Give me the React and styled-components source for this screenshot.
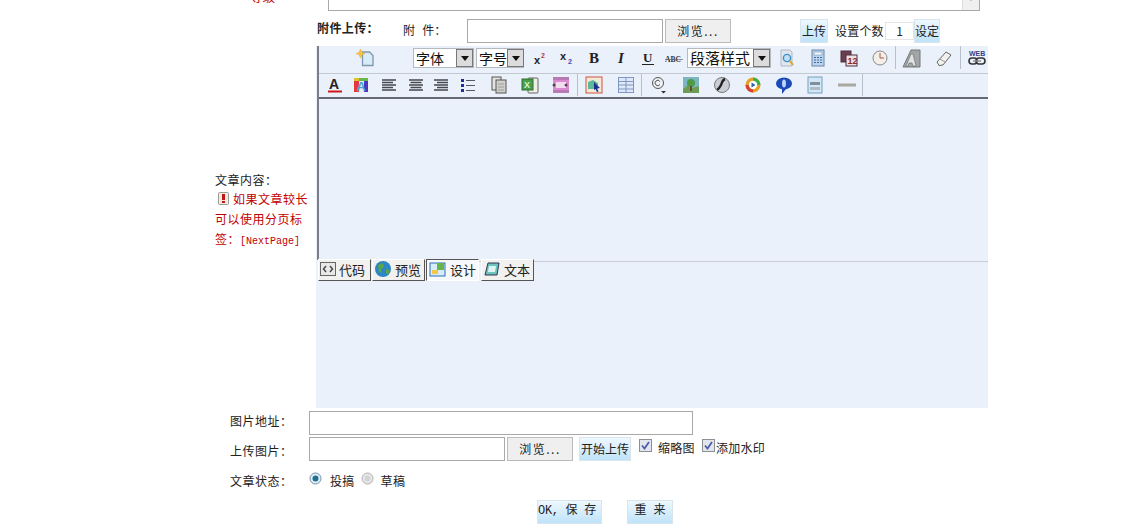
import React from 'react';
import styled, { createGlobalStyle } from 'styled-components';

const MONO_STACK = '"Liberation Mono", "Noto Sans CJK SC", monospace';
const COLON = '\uFF1A';

const GlobalStyle = createGlobalStyle`
  html, body {
    margin: 0;
    padding: 0;
    background: #fff;
    overflow: hidden;
  }
  body {
    font-family: "Noto Sans CJK SC", "Liberation Sans", sans-serif;
    font-size: 12px;
    color: #222;
  }
`;

const Page = styled.div`
  width: 1126px;
  height: 532px;
  overflow: hidden;
`;

const TopRow = styled.div`
  display: flex;
  height: 11px;
  overflow: hidden;
  align-items: flex-end;
`;
const LevelLabel = styled.div`
  width: 78px;
  margin-left: 250px;
  color: #c00000;
  font-size: 12.5px;
  line-height: 18px;
  height: 18px;
  flex: none;
  margin-bottom: 5px;
`;
const TopBox = styled.div`
  width: 652px;
  height: 30px;
  border: 1px solid #a9a9a9;
  box-sizing: border-box;
  flex: none;
  position: relative;
`;
const TopArrow = styled.div`
  position: absolute;
  right: 0;
  bottom: 0;
  width: 16px;
  height: 20px;
  background: #f0f0f0;
  border-left: 1px solid #ddd;
  &::after {
    content: '';
    position: absolute;
    left: 5px;
    bottom: 6px;
    border: 3px solid transparent;
    border-top: 3px solid #999;
  }
`;

const AttachRow = styled.div`
  display: flex;
  align-items: center;
  height: 26px;
  margin-top: 7px;
  padding-left: 317px;
`;
const AttachTitle = styled.b`
  width: 86px;
  margin-bottom: 8px;
  letter-spacing: 0.4px;
  white-space: nowrap;
`;
const AttachLabel = styled.span`
  width: 64px;
  margin-bottom: 2px;
  font-family: ${MONO_STACK};
  white-space: pre;
`;
const TextBox = styled.div`
  box-sizing: border-box;
  width: ${p => p.$w}px;
  height: 24px;
  border: 1px solid #a9a9a9;
  background: #fff;
  flex: none;
`;
const BrowseButton = styled.div`
  box-sizing: border-box;
  width: 66px;
  height: 24px;
  margin-left: 2px;
  border: 1px solid #bbb;
  background: #efefef;
  text-align: center;
  line-height: 22px;
  letter-spacing: 1.5px;
  flex: none;
`;
const BlueButton = styled.div`
  box-sizing: border-box;
  height: 24px;
  width: ${p => p.$w}px;
  margin-left: ${p => p.$ml || 0}px;
  border: 1px solid #d8e4ee;
  background: linear-gradient(#eef8ff, #bfe3f8);
  text-align: center;
  line-height: 21px;
  flex: none;
  white-space: pre;
`;
const SaveButton = styled(BlueButton)`
  font-family: ${MONO_STACK};
  text-align: left;
  letter-spacing: -0.3px;
`;
const ResetButton = styled(BlueButton)`
  font-family: ${MONO_STACK};
`;
const CountLabel = styled.span`
  margin-left: 7px;
  margin-bottom: 2px;
  width: 50px;
  flex: none;
  letter-spacing: 0.2px;
`;
const CountBox = styled.div`
  box-sizing: border-box;
  width: 29px;
  height: 18px;
  border: 1px solid #e4e4e4;
  text-align: center;
  line-height: 16px;
  flex: none;
`;

const EditorRow = styled.div`
  display: flex;
  margin-top: 2px;
`;
const SideNote = styled.div`
  width: 101px;
  margin-left: 215px;
  padding-top: 124px;
  line-height: 20px;
  flex: none;
  letter-spacing: 0.5px;
`;
const NoteTitle = styled.div`
  height: 19px;
`;
const RedText = styled.div`
  color: #c00000;
  font-size: 12px;
`;
const RedSmall = styled.span`
  font-family: "Liberation Mono", monospace;
  font-size: 10px;
  letter-spacing: 0;
`;
const WarnMark = styled.svg`
  vertical-align: -1px;
  margin: 0 4px 0 3px;
`;
const Editor = styled.div`
  width: 672px;
  height: 362px;
  background: #eaf1fb;
  overflow: hidden;
  flex: none;
  padding-left: 1px;
  box-sizing: border-box;
`;
const EditorFrame = styled.div`
  border-left: 2px solid #7b7e86;
`;
const ToolRow = styled.div`
  box-sizing: border-box;
  display: flex;
  align-items: center;
  height: ${p => p.$h}px;
  padding-bottom: ${p => p.$pb || 0}px;
  border-bottom: ${p => p.$bottom || 'none'};
`;
const ToolSlot = styled.div`
  width: 20px;
  height: 20px;
  margin-left: ${p => p.$ml}px;
  display: flex;
  align-items: center;
  justify-content: center;
  flex: none;
`;
const ToolSep = styled.div`
  width: 1px;
  align-self: stretch;
  margin-left: ${p => p.$ml}px;
  background: #b9bfc8;
  flex: none;
`;
const FakeSelect = styled.div`
  box-sizing: border-box;
  display: flex;
  width: ${p => p.$w}px;
  height: 20px;
  margin-left: ${p => p.$ml}px;
  background: #fff;
  border: 1px solid #b5b9c0;
  font-size: ${p => p.$fs}px;
  line-height: 18px;
  color: #111;
  flex: none;
`;
const SelectText = styled.span`
  flex: 1;
  padding-left: 2px;
  white-space: nowrap;
`;
const SelectArrow = styled.span`
  width: 17px;
  background: #dcdcdc;
  border: 1px solid #777;
  box-sizing: border-box;
  position: relative;
  flex: none;
  &::after {
    content: '';
    position: absolute;
    left: 4px;
    top: 6px;
    border: 4px solid transparent;
    border-top: 5px solid #111;
  }
`;
const DesignArea = styled.div`
  height: 161px;
  border-top: 2px solid #666a73;
`;
const TabStrip = styled.div`
  display: flex;
  height: 22px;
  margin-top: -1px;
  margin-left: 1px;
  gap: 1px;
  position: relative;
  &::before {
    content: '';
    position: absolute;
    left: 0;
    right: 0;
    top: 2px;
    height: 1px;
    background: #c9ced6;
  }
`;
const Tab = styled.div`
  box-sizing: border-box;
  position: relative;
  display: flex;
  align-items: center;
  gap: 3px;
  width: 53px;
  height: 22px;
  margin-left: ${p => p.$ml || 0}px;
  padding-left: ${p => (p.$active ? 2 : 1)}px;
  padding-bottom: 2px;
  font-size: 13px;
  background: ${p => (p.$active ? '#f6f8fb' : '#f1f1ef')};
  border-style: solid;
  border-width: 1px;
  border-color: ${p => (p.$active ? '#555 #fff #fff #555' : '#fff #555 #555 #fff')};
`;

const FieldRow = styled.div`
  display: flex;
  align-items: center;
  height: ${p => p.$h}px;
  margin-top: ${p => p.$mt || 0}px;
  padding-left: 230px;
`;
const FieldLabel = styled.div`
  width: 79px;
  letter-spacing: 0.5px;
  flex: none;
  margin-bottom: ${p => p.$lift || 0}px;
  margin-top: ${p => p.$drop || 0}px;
`;
const Tick = styled.span`
  display: inline-flex;
  flex: none;
  margin-left: ${p => p.$ml}px;
  margin-top: ${p => p.$mt}px;
`;
const Inline = styled.span`
  margin-left: ${p => p.$ml}px;
  margin-bottom: ${p => p.$lift || 0}px;
  letter-spacing: 0.3px;
  flex: none;
`;
const ActionRow = styled.div`
  display: flex;
  padding-left: 537px;
  margin-top: 8px;
`;

const I = ({ children, w = 18, h = 18, vb }) => (
  <svg width={w} height={h} viewBox={vb || `0 0 ${w} ${h}`}>{children}</svg>
);

const NewDoc = () => <I><path d="M6.500 3h7l3.500 3.500V16.500H6.500z" fill="#d8ebf9" stroke="#7e98ae" strokeWidth="1.300"/><path d="M0 4.500l3-1L4.500 0 6 3.500l3 1-3 1.200L4.500 9 3 5.700z" fill="#f5c542" stroke="#e5a63a" strokeWidth=".5"/></I>;
const Sup = () => <I><text x="3" y="15" fontSize="11" fontWeight="700" fontFamily="Liberation Sans" fill="#222">x</text><text x="10" y="9" fontSize="7" fontWeight="700" fontFamily="Liberation Sans" fill="#c23a3a">2</text></I>;
const Sub = () => <I><text x="2" y="11" fontSize="11" fontWeight="700" fontFamily="Liberation Sans" fill="#222">x</text><text x="10" y="15" fontSize="7" fontWeight="700" fontFamily="Liberation Sans" fill="#3a4ac2">2</text></I>;
const Bold = () => <I><text x="3" y="14" fontSize="15" fontWeight="700" fontFamily="Liberation Serif" fill="#222">B</text></I>;
const Ital = () => <I><text x="5" y="14" fontSize="15" fontWeight="700" fontStyle="italic" fontFamily="Liberation Serif" fill="#222">I</text></I>;
const Under = () => <I><text x="4" y="13" fontSize="13" fontWeight="700" fontFamily="Liberation Serif" fill="#222">U</text><path d="M3 15.500h12" stroke="#222"/></I>;
const Strike = () => <I><text x="0" y="13" fontSize="7.500" fontWeight="700" fontFamily="Liberation Serif" fill="#333">ABC</text><path d="M0 10.500h18" stroke="#666" strokeWidth=".7"/></I>;
const Search = () => <I><path d="M3 1h9l2 2v14H3z" fill="#dfe6ee" stroke="#aeb8c4"/><circle cx="9" cy="9" r="3.600" fill="#bfe0f5" stroke="#3d8ecb" strokeWidth="1.400"/><path d="M12 12l3 4" stroke="#e2a32c" strokeWidth="2"/></I>;
const Calc = () => <I><rect x="3" y="1" width="12" height="16" fill="#bcd4ee" stroke="#6a86a8"/><rect x="5" y="3" width="8" height="3" fill="#eef5fc" stroke="#6a86a8" strokeWidth=".5"/><path d="M5 8.500h8M5 11h8M5 13.500h8" stroke="#3f6ba3" strokeDasharray="2 1"/></I>;
const DateIco = () => <I><rect x="1" y="2" width="10" height="11" fill="#6d3d50" stroke="#4a3340"/><rect x="6" y="6" width="11" height="11" fill="#ecdfe2" stroke="#4a3340"/><text x="7.500" y="15" fontSize="9" fontWeight="700" fontFamily="Liberation Sans" fill="#8a2b2b">12</text></I>;
const Clock = () => <I><circle cx="9" cy="9" r="7" fill="#f3efe6" stroke="#8d8a84"/><path d="M9 4v5h4" fill="none" stroke="#a55" strokeWidth="1"/></I>;
const BigA = () => <I w={20} h={20}><path d="M1 19L9 2h9v17z" fill="#a0a6a6" stroke="#777"/><path d="M4 18L9 6h2l3 12h-3l-1-3H7l-1 3z" fill="#dfe3e3" stroke="#666" strokeWidth=".6"/></I>;
const Eraser = () => <I><path d="M2 13L11 3l5 3-8 10-4 .5z" fill="#f1f1ee" stroke="#666"/><path d="M5 10l5 3" stroke="#999"/></I>;
const Web = () => <I><text x="1" y="7" fontSize="7" fontWeight="700" fontFamily="Liberation Sans" fill="#36418e">WEB</text><rect x="1" y="9" width="8" height="6" rx="3" fill="none" stroke="#333" strokeWidth="1.600"/><rect x="8" y="9" width="9" height="6" rx="3" fill="none" stroke="#333" strokeWidth="1.600"/><path d="M5 12h8" stroke="#888" strokeWidth="1.400"/></I>;
const ForeA = () => <I><text x="3" y="13" fontSize="14" fontWeight="700" fontFamily="Liberation Sans" fill="#222">A</text><rect x="2" y="14.500" width="14" height="2" fill="#d21818"/></I>;
const BackA = () => <I><rect x="2" y="2" width="5" height="14" fill="#e23a3a"/><rect x="7" y="2" width="5" height="14" fill="#e8ecf2"/><rect x="12" y="2" width="4" height="14" fill="#4a38c0"/><rect x="2" y="2" width="14" height="3" fill="#66b84a"/><rect x="2" y="2" width="5" height="3" fill="#e0c030"/><text x="4.500" y="15" fontSize="13" fontWeight="700" fontFamily="Liberation Sans" fill="#4aa0d0">A</text></I>;
const Lines = ({ d }) => <I><path d={d} stroke="#45484e" strokeWidth="1.300"/></I>;
const AlignL = () => <Lines d="M2 4h14M2 6.500h11M2 9h14M2 11.500h11M2 14h14"/>;
const AlignC = () => <Lines d="M2 4h14M3.500 6.500h11M2 9h14M3.500 11.500h11M2 14h14"/>;
const AlignR = () => <Lines d="M2 4h14M5 6.500h11M2 9h14M5 11.500h11M2 14h14"/>;
const ListIco = () => <I><path d="M2 3h3v3H2zM2 8h3v3H2zM2 13h3v3H2z" fill="#1f2f9a"/><path d="M7 4.500h9M7 9.500h9M7 14.500h9" stroke="#55585e" strokeWidth="1.200"/></I>;
const Copy = () => <I><rect x="2" y="1" width="9" height="13" fill="#e4e4e0" stroke="#555"/><rect x="6" y="4" width="10" height="13" fill="#d0d0ce" stroke="#555"/><path d="M8 8h6M8 11h6M8 14h6" stroke="#999"/></I>;
const Excel = () => <I><rect x="7" y="2" width="10" height="15" rx="1" fill="#efefe8" stroke="#666"/><rect x="1" y="3" width="11" height="11" fill="#4aa04a" stroke="#2f6e2f"/><text x="3" y="12" fontSize="9" fontWeight="700" fontFamily="Liberation Sans" fill="#d8f5d8">X</text></I>;
const Media = () => <I><rect x="1" y="1" width="16" height="16" fill="#d98ad0"/><rect x="1" y="1" width="16" height="3" fill="#b77ab5"/><rect x="1" y="14" width="16" height="3" fill="#b77ab5"/><rect x="4" y="6" width="10" height="6" fill="#f2dcf0"/><path d="M3 9a1 1 0 100 .1M15 9a1 1 0 100 .1" stroke="#555"/></I>;
const InsertIco = () => <I><rect x="1" y="1" width="16" height="16" fill="#f1ead8" stroke="#d0553c"/><path d="M3 13V6l5-2 5 3v6z" fill="#5fb79a"/><path d="M9 6l6 6-3 .5 1.500 3-1.500.5-1.500-3L9 14z" fill="#1d2f8f"/></I>;
const TableIco = () => <I><rect x="1.500" y="1.500" width="15" height="15" fill="#dfe8f6" stroke="#7f97c5"/><path d="M1.500 5.500h15M1.500 9h15M1.500 13h15M9 1.500v15" stroke="#7f97c5"/></I>;
const Copyright = () => <I><circle cx="8" cy="7" r="5.500" fill="#eef1f6" stroke="#555"/><path d="M10 5.500a2.700 2.700 0 100 3" fill="none" stroke="#555"/><path d="M11 15h5l-2.500 2.500z" fill="#333"/></I>;
const Picture = () => <I><rect x="1" y="1" width="16" height="16" fill="#7cb6c4"/><path d="M1 13l5-4 4 3 7-2v7H1z" fill="#6d9c54"/><circle cx="9" cy="7" r="4" fill="#4f9a45"/><rect x="8" y="10" width="2" height="5" fill="#6d4a2a"/></I>;
const Flash = () => <I><circle cx="9" cy="9" r="7.500" fill="#c9ced6" stroke="#777"/><path d="M12 3c-3 1-3 4-4 6s-2 4-4 5" fill="none" stroke="#222" strokeWidth="2.400"/></I>;
const Play = () => <I><circle cx="9" cy="9" r="7.500" fill="#e8a020"/><path d="M9 1.500a7.500 7.500 0 017.500 7.500H9z" fill="#3cae4a"/><path d="M1.500 9A7.500 7.500 0 009 16.500V9z" fill="#d8402c"/><circle cx="9" cy="9" r="4.200" fill="#fff"/><path d="M7.500 6.500v5l4-2.500z" fill="#2a60b0"/></I>;
const Chat = () => <I><ellipse cx="9" cy="7.500" rx="8" ry="6" fill="#1b49b8"/><path d="M7 13v5l4-5z" fill="#1b49b8"/><ellipse cx="9" cy="7.500" rx="2" ry="4" fill="#bcd3f5"/></I>;
const FormIco = () => <I><rect x="2" y="1" width="14" height="16" fill="#d4e6f4" stroke="#6fa2c6"/><rect x="4" y="6" width="10" height="3" fill="#7f8f9c"/><rect x="4" y="11" width="10" height="3" fill="#aebcc8"/></I>;
const Rule = () => <I><rect x="0" y="7.500" width="18" height="3" fill="#a8a8a0"/></I>;

const SCRIPT_TOOLS = [[Sup, 6], [Sub, 7], [Bold, 8], [Ital, 7], [Under, 6], [Strike, 6]];
const INSERT_TOOLS = [[Search, 6], [Calc, 11], [DateIco, 11], [Clock, 11]];
const BOTTOM_TOOLS = [
  [ForeA, 6], [BackA, 6], [AlignL, 8], [AlignC, 7], [AlignR, 5], [ListIco, 7],
  [Copy, 11], [Excel, 11], [Media, 11], 'sep:6',
  [InsertIco, 6], [TableIco, 12], 'sep:5',
  [Copyright, 7], [Picture, 12], [Flash, 11], [Play, 11], [Chat, 11], [FormIco, 11], [Rule, 12], 'sep:5',
];

const renderTool = ([Icon, gap], i) => (
  <ToolSlot key={i} $ml={gap}><Icon /></ToolSlot>
);

const Select = ({ w, ml, fs, children }) => (
  <FakeSelect $w={w} $ml={ml} $fs={fs}>
    <SelectText>{children}</SelectText>
    <SelectArrow />
  </FakeSelect>
);

const Checkbox = () => (
  <svg width="13" height="13" viewBox="0 0 13 13">
    <rect x=".5" y=".5" width="12" height="12" fill="#e2e5ec" stroke="#8c8f96"/>
    <path d="M3 6.500l2.500 3L10 3" fill="none" stroke="#4a5aa8" strokeWidth="1.700"/>
  </svg>
);
const Radio = ({ on }) => (
  <svg width="13" height="13" viewBox="0 0 13 13">
    <circle cx="6.500" cy="6.500" r="5.500" fill={on ? '#e4eef6' : '#e8e8e8'} stroke={on ? '#6e90ac' : '#b0b0b0'}/>
    <circle cx="6.500" cy="6.500" r="3" fill={on ? '#1f6f94' : '#d4d4d4'}/>
  </svg>
);

const TabIcon = ({ kind }) => {
  if (kind === 'code') return <I w={16} h={16}><rect x=".5" y="1.500" width="15" height="13" fill="#e8e8e8" stroke="#666"/><path d="M6 5L3.500 8 6 11M10 5l2.500 3L10 11" fill="none" stroke="#444" strokeWidth="1.400"/></I>;
  if (kind === 'globe') return <I w={18} h={18}><circle cx="9" cy="9" r="8" fill="#2a86c4"/><path d="M4 5l5-2 1 4-3 2 1 4-3-1zM12 9l4 1-2 5-2-2z" fill="#5aa548"/></I>;
  if (kind === 'design') return <I w={18} h={16}><rect x="1" y="2" width="15" height="13" fill="#d8ebf8" stroke="#2a70b8"/><rect x="8" y="2" width="7" height="7" fill="#66b44a"/><rect x="3" y="9" width="6" height="4" fill="#f3c64a"/></I>;
  return <I w={18} h={16}><path d="M2 14L5 2h11l-2 12z" fill="#6cc4be" stroke="#335"/><path d="M6 5h7l-1 6H5z" fill="#dff4f2"/></I>;
};

export default function App() {
  return (
    <Page>
      <GlobalStyle />
      <TopRow>
        <LevelLabel>等级</LevelLabel>
        <TopBox><TopArrow /></TopBox>
      </TopRow>

      <AttachRow>
        <AttachTitle>附件上传{COLON}</AttachTitle>
        <AttachLabel>附 件{COLON}</AttachLabel>
        <TextBox $w={196} />
        <BrowseButton>浏览...</BrowseButton>
        <BlueButton $w={28} $ml={69}>上传</BlueButton>
        <CountLabel>设置个数</CountLabel>
        <CountBox>1</CountBox>
        <BlueButton $w={26} $ml={0}>设定</BlueButton>
      </AttachRow>

      <EditorRow>
        <SideNote>
          <NoteTitle>文章内容{COLON}</NoteTitle>
          <RedText>
            <WarnMark width="11" height="13" viewBox="0 0 11 13">
              <rect x=".5" y=".5" width="10" height="12" rx="1" fill="#f4ecd8" stroke="#999"/>
              <rect x="4" y="2" width="3" height="6" fill="#c01818"/>
              <rect x="4" y="9" width="3" height="2" fill="#c01818"/>
            </WarnMark>
            如果文章较长
          </RedText>
          <RedText>可以使用分页标</RedText>
          <RedText>签{COLON}<RedSmall>[NextPage]</RedSmall></RedText>
        </SideNote>
        <Editor>
          <EditorFrame>
            <ToolRow $h={28} $pb={4} $bottom="1px solid #c3c9d2">
              {renderTool([NewDoc, 36], 'new')}
              <Select w={61} ml={38} fs={14}>字体</Select>
              <Select w={48} ml={2} fs={14}>字号</Select>
              {SCRIPT_TOOLS.map(renderTool)}
              <Select w={84} ml={3} fs={15}>段落样式</Select>
              {INSERT_TOOLS.map(renderTool)}
              <ToolSep $ml={5} />
              <ToolSlot $ml={6}><BigA /></ToolSlot>
              <ToolSlot $ml={12}><Eraser /></ToolSlot>
              <ToolSep $ml={6} />
              <ToolSlot $ml={6}><Web /></ToolSlot>
            </ToolRow>
            <ToolRow $h={23} $pb={1}>
              {BOTTOM_TOOLS.map((t, i) =>
                typeof t === 'string'
                  ? <ToolSep key={i} $ml={Number(t.slice(4))} />
                  : renderTool(t, i)
              )}
            </ToolRow>
            <DesignArea />
          </EditorFrame>
          <TabStrip>
            <Tab><TabIcon kind="code" />代码</Tab>
            <Tab><TabIcon kind="globe" />预览</Tab>
            <Tab $active><TabIcon kind="design" />设计</Tab>
            <Tab $ml={1}><TabIcon kind="text" />文本</Tab>
          </TabStrip>
        </Editor>
      </EditorRow>

      <FieldRow $h={24} $mt={3}>
        <FieldLabel $lift={6}>图片地址{COLON}</FieldLabel>
        <TextBox $w={384} />
      </FieldRow>
      <FieldRow $h={24} $mt={2}>
        <FieldLabel $drop={2}>上传图片{COLON}</FieldLabel>
        <TextBox $w={196} />
        <BrowseButton>浏览...</BrowseButton>
        <BlueButton $w={52} $ml={6}>开始上传</BlueButton>
        <Tick $ml={8} $mt={-8}><Checkbox /></Tick>
        <Inline $ml={6} $lift={3}>缩略图</Inline>
        <Tick $ml={7} $mt={-8}><Checkbox /></Tick>
        <Inline $ml={1} $lift={3}>添加水印</Inline>
      </FieldRow>
      <FieldRow $h={24} $mt={7}>
        <FieldLabel>文章状态{COLON}</FieldLabel>
        <Tick $ml={0} $mt={-4}><Radio on /></Tick>
        <Inline $ml={8}>投搞</Inline>
        <Tick $ml={6} $mt={-4}><Radio /></Tick>
        <Inline $ml={7}>草稿</Inline>
      </FieldRow>
      <ActionRow>
        <SaveButton $w={65}>OK, 保 存</SaveButton>
        <ResetButton $w={46} $ml={25}>重 来</ResetButton>
      </ActionRow>
    </Page>
  );
}
